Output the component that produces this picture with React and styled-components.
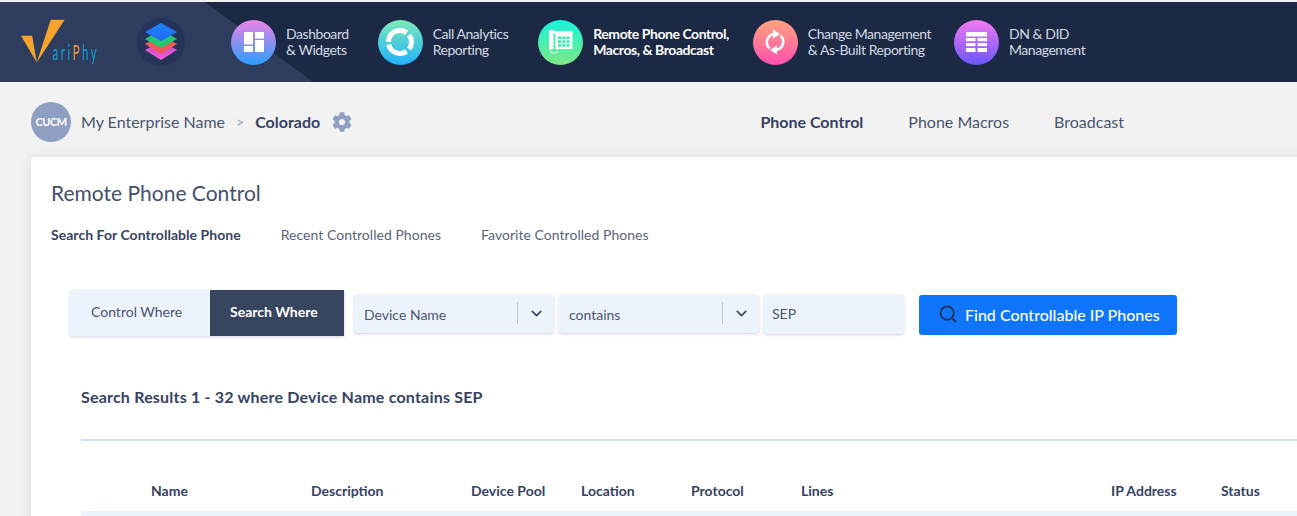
import React from "react";
import styled, { createGlobalStyle } from "styled-components";
import { FaCog } from "react-icons/fa";
import { ChevronDown, Search } from "lucide-react";

const navItems = [
  { id: "dash", top: "#ee82e6", bottom: "#2a9dfb", after: 29, lines: ["Dashboard", "& Widgets"] },
  { id: "call", top: "#7eeab8", bottom: "#1fb1fb", after: 30, lines: ["Call Analytics", "Reporting"] },
  { id: "phone", top: "#16f5dc", bottom: "#7ee884", after: 24, lines: ["Remote Phone Control,", "Macros, & Broadcast"], active: true },
  { id: "change", top: "#ffa47e", bottom: "#ff4fb0", after: 23, lines: ["Change Management", "& As-Built Reporting"] },
  { id: "dn", top: "#f27bf0", bottom: "#6a55fb", after: 0, lines: ["DN & DID", "Management"] },
];

const columns = [
  { label: "Name", width: 160 },
  { label: "Description", width: 160 },
  { label: "Device Pool", width: 110 },
  { label: "Location", width: 110 },
  { label: "Protocol", width: 110 },
  { label: "Lines", width: 310 },
  { label: "IP Address", width: 110 },
  { label: "Status", width: 110 },
];

const keypad = [0, 1, 2].flatMap((row) => [0, 1, 2].map((col) => [9 + col * 4.2, 6.5 + row * 3.8]));

const NavIcon = ({ id }) => {
  if (id === "dash") {
    return (
      <svg width="20" height="20" viewBox="0 0 20 20" fill="#fff">
        <rect x="0" y="0" width="9" height="12.5" />
        <rect x="0" y="14" width="9" height="6" />
        <rect x="11" y="0" width="9" height="6.5" />
        <rect x="11" y="8" width="9" height="12" />
      </svg>
    );
  }
  if (id === "call") {
    return (
      <svg width="32" height="32" viewBox="0 0 32 32" fill="none" stroke="#fff" strokeWidth="5">
        <path d="M22.6 6.58A11.5 11.5 0 0 0 4.5 16" />
        <path d="M4.75 18.4A11.5 11.5 0 0 0 22.6 25.4" />
        <path d="M25.06 8.92A11.5 11.5 0 0 1 25.06 23.08" />
      </svg>
    );
  }
  if (id === "phone") {
    return (
      <svg width="24" height="24" viewBox="0 0 24 24" fill="#fff">
        <rect x="0" y="0" width="4.5" height="19" />
        <path d="M1.5 19v2a2 2 0 0 0 2 2h3a2 2 0 0 0 2-2v-2" fill="none" stroke="#fff" strokeWidth="1" />
        <rect x="4.5" y="1" width="19" height="3" />
        <rect x="6.5" y="1" width="17" height="18" />
        <g fill="#3fe8b0">
          {keypad.map(([x, y]) => (
            <rect key={`${x}-${y}`} x={x} y={y} width="3.2" height="2.6" />
          ))}
        </g>
      </svg>
    );
  }
  if (id === "change") {
    return (
      <svg width="20" height="26" viewBox="0 0 20 26" fill="#fff">
        <path d="M8.5 5A8.5 8.5 0 0 0 4.5 19.5" fill="none" stroke="#fff" strokeWidth="2.6" />
        <path d="M11.5 21A8.5 8.5 0 0 0 15.5 6.5" fill="none" stroke="#fff" strokeWidth="2.6" />
        <polygon points="8,0.5 15,5 8,9.5" />
        <polygon points="12,16.5 5,21 12,25.5" />
      </svg>
    );
  }
  return (
    <svg width="21" height="20" viewBox="0 0 21 20" fill="#fff">
      <rect x="0" y="0" width="21" height="4.5" />
      <rect x="0" y="6" width="9.5" height="3.2" />
      <rect x="11.5" y="6" width="9.5" height="3.2" />
      <rect x="0" y="11" width="9.5" height="3.2" />
      <rect x="11.5" y="11" width="9.5" height="3.2" />
      <rect x="0" y="16" width="9.5" height="4" />
      <rect x="11.5" y="16" width="9.5" height="4" />
    </svg>
  );
};

const LogoMark = () => (
  <svg width="84" height="54" viewBox="0 0 84 54">
    <polygon points="0,18 12,18 17,47" fill="#f7a42c" />
    <polygon points="32,1 47,1 17,47" fill="#f7a42c" />
    <text
      transform="translate(34 44) scale(1 1.9)"
      fontFamily="Lato, sans-serif"
      fontWeight="400"
      fontSize="12.5"
      letterSpacing="2.6"
      fill="#159bd6"
    >
      ari<tspan fill="#e8973a">P</tspan>hy
    </text>
  </svg>
);

const StackMark = () => (
  <svg width="34" height="38" viewBox="0 0 34 38">
    <defs>
      <linearGradient id="stackPink" x1="0" y1="0" x2="0" y2="1">
        <stop offset="0" stopColor="#c04ac0" />
        <stop offset="1" stopColor="#f45ce0" />
      </linearGradient>
      <linearGradient id="stackBlue" x1="0" y1="0" x2="0" y2="1">
        <stop offset="0" stopColor="#1c86f8" />
        <stop offset="1" stopColor="#2266ff" />
      </linearGradient>
    </defs>
    <polygon points="17,18 33,27 17,37 1,27" fill="url(#stackPink)" />
    <polygon points="17,12 33,21 17,31 1,21" fill="#f0595a" />
    <polygon points="17,7 33,16 17,25 1,16" fill="#23c76f" />
    <polygon points="17,0 33,9 17,18 1,9" fill="url(#stackBlue)" />
  </svg>
);

export default function App() {
  return (
    <>
      <GlobalStyle />
      <Page>
        <Header>
          <Logo>
            <LogoMark />
          </Logo>
          <StackBadge>
            <StackMark />
          </StackBadge>
          <Nav>
            {navItems.map((item) => (
              <NavItem key={item.id} $active={item.active} $after={item.after}>
                <NavCircle $top={item.top} $bottom={item.bottom}>
                  <NavIcon id={item.id} />
                </NavCircle>
                <span>
                  {item.lines[0]}
                  <br />
                  {item.lines[1]}
                </span>
              </NavItem>
            ))}
          </Nav>
        </Header>

        <SubBar>
          <Crumbs>
            <Avatar>CUCM</Avatar>
            <Enterprise>My Enterprise Name</Enterprise>
            <CrumbSep>&gt;</CrumbSep>
            <Cluster>Colorado</Cluster>
            <FaCog size={20} color="#8f9fc1" />
          </Crumbs>
          <SubTabs>
            <SubTab $active>Phone Control</SubTab>
            <SubTab>Phone Macros</SubTab>
            <SubTab>Broadcast</SubTab>
          </SubTabs>
        </SubBar>

        <Card>
          <Title>Remote Phone Control</Title>
          <ModeTabs>
            <ModeTab $active>Search For Controllable Phone</ModeTab>
            <ModeTab>Recent Controlled Phones</ModeTab>
            <ModeTab>Favorite Controlled Phones</ModeTab>
          </ModeTabs>

          <SearchRow>
            <Toggle>
              <ToggleButton $width={140}>Control Where</ToggleButton>
              <ToggleButton $width={134} $active>
                Search Where
              </ToggleButton>
            </Toggle>
            <SelectBox>
              <SelectText>Device Name</SelectText>
              <SelectArrow>
                <ChevronDown size={17} strokeWidth={2.2} />
              </SelectArrow>
            </SelectBox>
            <SelectBox>
              <SelectText>contains</SelectText>
              <SelectArrow>
                <ChevronDown size={17} strokeWidth={2.2} />
              </SelectArrow>
            </SelectBox>
            <TextBox>SEP</TextBox>
            <FindButton>
              <Search size={20} strokeWidth={2.4} color="#26355a" />
              Find Controllable IP Phones
            </FindButton>
          </SearchRow>

          <Results>
            <ResultsTitle>Search Results 1 - 32 where Device Name contains SEP</ResultsTitle>
            <Divider />
            <TableHead>
              {columns.map((col) => (
                <HeadCell key={col.label} $width={col.width}>
                  {col.label}
                </HeadCell>
              ))}
            </TableHead>
            <FirstRow />
          </Results>
        </Card>
      </Page>
    </>
  );
}

const GlobalStyle = createGlobalStyle`
  html, body {
    margin: 0;
    height: 100%;
    overflow: hidden;
    background: #f2f2f2;
  }
  body {
    font-family: Lato, "Liberation Sans", sans-serif;
    color: #3a4662;
  }
  * {
    box-sizing: border-box;
  }
`;

const Page = styled.div`
  width: 1297px;
  height: 516px;
  overflow: hidden;
  padding-top: 2px;
  background: #f2f2f2;
`;

const Header = styled.header`
  position: relative;
  display: flex;
  align-items: center;
  height: 80px;
  background: #1c2945;
  overflow: hidden;

  &::before {
    content: "";
    position: absolute;
    inset: 0;
    background: #2e3d5e;
    clip-path: polygon(0 0, 205px 0, 313px 100%, 0 100%);
  }
`;

const Logo = styled.div`
  position: relative;
  display: flex;
  width: 78px;
  margin-left: 21px;
  padding-top: 4px;
`;

const StackBadge = styled.div`
  position: relative;
  display: flex;
  align-items: center;
  justify-content: center;
  width: 48px;
  height: 48px;
  margin-left: 38px;
  border-radius: 50%;
  background: #26345a;
`;

const Nav = styled.nav`
  position: relative;
  display: flex;
  align-items: center;
  margin-left: 46px;
`;

const NavItem = styled.a`
  display: flex;
  align-items: center;
  gap: 10px;
  margin-right: ${(p) => p.$after}px;
  font-size: 14px;
  line-height: 16px;
  letter-spacing: -0.45px;
  white-space: nowrap;
  color: ${(p) => (p.$active ? "#ffffff" : "#d3d9e4")};
  font-weight: ${(p) => (p.$active ? 700 : 400)};
`;

const NavCircle = styled.div`
  display: flex;
  align-items: center;
  justify-content: center;
  width: 45px;
  height: 45px;
  border-radius: 50%;
  background: linear-gradient(${(p) => p.$top}, ${(p) => p.$bottom});
`;

const SubBar = styled.div`
  display: flex;
  align-items: center;
  justify-content: space-between;
  height: 75px;
  padding: 5px 0 0 31px;
`;

const Crumbs = styled.div`
  display: flex;
  align-items: center;
  line-height: 20px;
`;

const Avatar = styled.div`
  display: flex;
  align-items: center;
  justify-content: center;
  width: 40px;
  height: 40px;
  border-radius: 50%;
  background: #8f9fc1;
  color: #fff;
  font-size: 11px;
  font-weight: 700;
  letter-spacing: -0.5px;
`;

const Enterprise = styled.span`
  margin-left: 10px;
  font-size: 16px;
  color: #4a556f;
`;

const CrumbSep = styled.span`
  margin: 0 11px;
  font-size: 14px;
  color: #8f9fc1;
`;

const Cluster = styled.span`
  margin-right: 12px;
  font-size: 16px;
  font-weight: 700;
  color: #364263;
`;

const SubTabs = styled.div`
  display: flex;
  gap: 45px;
  margin-right: 173px;
  padding-bottom: 2px;
`;

const SubTab = styled.span`
  font-size: 16px;
  font-weight: ${(p) => (p.$active ? 700 : 400)};
  color: ${(p) => (p.$active ? "#364263" : "#4a556f")};
`;

const Card = styled.main`
  height: 400px;
  margin: 0 -20px 0 31px;
  padding: 23px 0 0 20px;
  border-radius: 4px;
  background: #fff;
  box-shadow: 0 0 12px rgba(60, 80, 120, 0.12);
`;

const Title = styled.h1`
  margin: 0;
  font-size: 21px;
  font-weight: 400;
  line-height: 26px;
  color: #44506c;
`;

const ModeTabs = styled.div`
  display: flex;
  gap: 40px;
  margin-top: 19px;
`;

const ModeTab = styled.span`
  font-size: 14px;
  line-height: 20px;
  letter-spacing: 0.04px;
  font-weight: ${(p) => (p.$active ? 700 : 400)};
  color: ${(p) => (p.$active ? "#364263" : "#5a6479")};
`;

const SearchRow = styled.div`
  display: flex;
  align-items: flex-start;
  margin: 45px 0 0 19px;
`;

const Toggle = styled.div`
  display: flex;
  height: 46px;
  margin-right: 10px;
  box-shadow: 0 1px 3px rgba(60, 80, 120, 0.25);
`;

const ToggleButton = styled.div`
  display: flex;
  align-items: center;
  width: ${(p) => p.$width}px;
  padding: 0 0 4px ${(p) => (p.$active ? 20 : 21)}px;
  font-size: 14px;
  font-weight: ${(p) => (p.$active ? 700 : 400)};
  background: ${(p) => (p.$active ? "#38455f" : "#edf3fd")};
  color: ${(p) => (p.$active ? "#ffffff" : "#4a556f")};
`;

const SelectBox = styled.div`
  display: flex;
  align-items: center;
  width: 200px;
  height: 38px;
  margin: 5px 5px 0 0;
  padding-left: 10px;
  border-radius: 3px;
  background: #edf3fd;
  box-shadow: 0 1px 3px rgba(60, 80, 120, 0.25);
`;

const SelectText = styled.span`
  flex: 1;
  font-size: 14px;
  color: #4a556f;
`;

const SelectArrow = styled.span`
  display: flex;
  align-items: center;
  justify-content: center;
  width: 37px;
  height: 22px;
  margin-top: -2px;
  border-left: 1px solid #c4c9d2;
  color: #3a4662;
`;

const TextBox = styled.div`
  display: flex;
  align-items: center;
  width: 140px;
  height: 39px;
  margin-top: 5px;
  padding: 0 0 2px 8px;
  border-radius: 3px;
  background: #edf3fd;
  box-shadow: 0 1px 3px rgba(60, 80, 120, 0.25);
  font-size: 14px;
  color: #4a556f;
`;

const FindButton = styled.button`
  display: flex;
  align-items: center;
  gap: 7px;
  width: 258px;
  height: 40px;
  margin: 5px 0 0 15px;
  padding: 0 0 2px 19px;
  border: 0;
  border-radius: 3px;
  background: #0f75ff;
  color: #fff;
  font-family: inherit;
  font-size: 16px;
  font-weight: 500;
  white-space: nowrap;
`;

const Results = styled.section`
  margin: 50px 0 0 30px;
`;

const ResultsTitle = styled.h2`
  margin: 0;
  font-size: 16px;
  line-height: 22px;
  letter-spacing: 0.2px;
  font-weight: 700;
  color: #364263;
`;

const Divider = styled.div`
  height: 2px;
  margin-top: 31px;
  background: #d5e0ee;
`;

const TableHead = styled.div`
  display: flex;
  height: 70px;
  padding: 32px 0 0 70px;
`;

const HeadCell = styled.div`
  flex: 0 0 ${(p) => p.$width}px;
  font-size: 14px;
  line-height: 36px;
  font-weight: 700;
  color: #364263;
`;

const FirstRow = styled.div`
  height: 40px;
  background: #edf3fd;
`;
